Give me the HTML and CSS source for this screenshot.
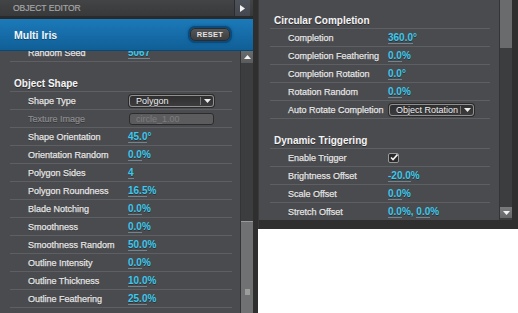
FILE: index.html
```html
<!DOCTYPE html>
<html lang="en">
<head>
  <meta charset="UTF-8" />
  <title>Object Editor</title>
  <link rel="stylesheet" href="styles.css">
</head>
<body>
  <div class="workspace">

    <section class="editor">
      <header class="editor-head">
        <span>OBJECT EDITOR</span>
        <div class="collapse">
          <svg width="5" height="7" viewBox="0 0 5 7"><path d="M0 0 L5 3.5 L0 7 Z" fill="#f2f2f2"/></svg>
        </div>
      </header>

      <div class="layer-bar">
        <h1>Multi Iris</h1>
        <div class="reset">RESET</div>
      </div>

      <div class="editor-body">
        <div class="props">
          <div class="row"><span class="label">Random Seed</span><span class="val"><span class="num">5067</span></span></div>

          <div class="section">Object Shape</div>
          <div class="row">
            <span class="label">Shape Type</span>
            <div class="select"><span>Polygon</span><span class="caret"><svg width="7" height="4" viewBox="0 0 7 4"><path d="M0 0 H7 L3.5 4 Z" fill="#eee"/></svg></span></div>
          </div>
          <div class="row">
            <span class="label off">Texture Image</span>
            <div class="field">circle_1.00</div>
          </div>
          <div class="row"><span class="label">Shape Orientation</span><span class="val"><span class="num">45.0</span>°</span></div>
          <div class="row"><span class="label">Orientation Random</span><span class="val"><span class="num">0.0</span>%</span></div>
          <div class="row"><span class="label">Polygon Sides</span><span class="val"><span class="num">4</span></span></div>
          <div class="row"><span class="label">Polygon Roundness</span><span class="val"><span class="num">16.5</span>%</span></div>
          <div class="row"><span class="label">Blade Notching</span><span class="val"><span class="num">0.0</span>%</span></div>
          <div class="row"><span class="label">Smoothness</span><span class="val"><span class="num">0.0</span>%</span></div>
          <div class="row"><span class="label">Smoothness Random</span><span class="val"><span class="num">50.0</span>%</span></div>
          <div class="row"><span class="label">Outline Intensity</span><span class="val"><span class="num">0.0</span>%</span></div>
          <div class="row"><span class="label">Outline Thickness</span><span class="val"><span class="num">10.0</span>%</span></div>
          <div class="row"><span class="label">Outline Feathering</span><span class="val"><span class="num">25.0</span>%</span></div>
        </div>

        <div class="scrollbar">
          <div class="sb-btn"><svg width="7" height="4" viewBox="0 0 7 4"><path d="M0 4 H7 L3.5 0 Z" fill="#f4f4f4"/></svg></div>
          <div class="sb-track">
            <div class="sb-thumb"><i class="grip"></i></div>
          </div>
        </div>
      </div>
    </section>

    <section class="editor-alt">
      <div class="props">
        <div class="section first">Circular Completion</div>
        <div class="row"><span class="label">Completion</span><span class="val"><span class="num">360.0</span>°</span></div>
        <div class="row"><span class="label">Completion Feathering</span><span class="val"><span class="num">0.0</span>%</span></div>
        <div class="row"><span class="label">Completion Rotation</span><span class="val"><span class="num">0.0</span>°</span></div>
        <div class="row"><span class="label">Rotation Random</span><span class="val"><span class="num">0.0</span>%</span></div>
        <div class="row">
          <span class="label">Auto Rotate Completion</span>
          <div class="select"><span>Object Rotation</span><span class="caret"><svg width="7" height="4" viewBox="0 0 7 4"><path d="M0 0 H7 L3.5 4 Z" fill="#eee"/></svg></span></div>
        </div>

        <div class="section">Dynamic Triggering</div>
        <div class="row">
          <span class="label">Enable Trigger</span>
          <span class="check"><svg width="8" height="7" viewBox="0 0 8 7"><path d="M1 3.5 L3 5.5 L7.5 0.5" fill="none" stroke="#f4f4f4" stroke-width="1.6"/></svg></span>
        </div>
        <div class="row"><span class="label">Brightness Offset</span><span class="val"><span class="num">-20.0</span>%</span></div>
        <div class="row"><span class="label">Scale Offset</span><span class="val"><span class="num">0.0</span>%</span></div>
        <div class="row"><span class="label">Stretch Offset</span><span class="val"><span class="num">0.0</span>%, <span class="num">0.0</span>%</span></div>
      </div>

      <div class="scrollbar">
        <div class="sb-thumb top"></div>
        <div class="sb-track"></div>
        <div class="sb-btn down"><svg width="7" height="4" viewBox="0 0 7 4"><path d="M0 0 H7 L3.5 4 Z" fill="#f4f4f4"/></svg></div>
      </div>
    </section>

  </div>
</body>
</html>
```

FILE: styles.css
```css
body { margin: 0; background: #fff; font-family: "Liberation Sans", Arial, sans-serif; }
.workspace { display: flex; align-items: flex-start; }

/* left panel */
.editor {
  width: 258px;
  height: 313px;
  display: flex;
  flex-direction: column;
  background: #2f2f30;
  padding-right: 5px;
  box-sizing: border-box;
}
.editor-head {
  height: 16px;
  display: flex;
  align-items: center;
  background: linear-gradient(#434446, #38393b);
  border-bottom: 3px solid #2a2a2b;
  font-size: 8.5px;
  color: #a6a6a6;
  padding-left: 13px;
  -webkit-text-stroke: 0.2px #a6a6a6;
}
.editor-head span { flex: 1; }
.collapse {
  width: 15px;
  height: 16px;
  margin-right: 3px;
  background: linear-gradient(#4e525b, #444750);
  border-left: 1px solid #2c2c2e;
  display: flex;
  align-items: center;
  justify-content: center;
}
.layer-bar {
  height: 32px;
  box-sizing: border-box;
  display: flex;
  align-items: center;
  justify-content: space-between;
  padding: 0 23px 0 14px;
  background: linear-gradient(#1c7ab9, #105f97);
  border-bottom: 1px solid #0a4874;
}
.layer-bar h1 {
  margin: 0;
  font-size: 10.5px;
  font-weight: bold;
  color: #f2f6fa;
  text-shadow: 0 1px 0 rgba(0,0,0,.35);
}
.reset {
  width: 40px;
  height: 13px;
  box-sizing: border-box;
  border-radius: 5px;
  background: linear-gradient(#555658, #3c3d3f);
  border: 1px solid #2b2c2e;
  box-shadow: 0 0 0 2px #0b4a7a, 0 0 3px 2px #0c5488;
  color: #e2e2e2;
  font-size: 7.5px;
  font-weight: bold;
  letter-spacing: 0.3px;
  display: flex;
  align-items: center;
  justify-content: center;
}
.editor-body { flex: 1; min-height: 0; display: flex; }

.props {
  flex: 1;
  overflow: hidden;
  background: #4a4b4e;
}
.editor .props > :first-child { margin-top: -7px; }

.section {
  height: 30px;
  box-sizing: border-box;
  padding: 15px 0 0 4px;
  line-height: 14px;
  margin: 0 8px 0 10px;
  border-bottom: 1px solid #5e5f62;
  font-size: 10px;
  font-weight: bold;
  color: #f4f4f4;
  text-shadow: 0 1px 0 rgba(0,0,0,.4);
}
.row {
  height: 18px;
  box-sizing: border-box;
  display: flex;
  align-items: center;
  margin: 0 8px 0 10px;
  padding-left: 18px;
  border-bottom: 1px solid #5e5f62;
  font-size: 9px;
  color: #e4e4e4;
  text-shadow: 0 1px 0 rgba(0,0,0,.35);
}
.label { width: 100px; flex-shrink: 0; white-space: nowrap; -webkit-text-stroke: 0.25px #e4e4e4; }
.label.off { color: #8c8c8e; -webkit-text-stroke: 0.2px #8c8c8e; }
.val {
  color: #3cc9ec;
  font-size: 10px;
  font-weight: bold;
  white-space: nowrap;
}
.num { border-bottom: 1px solid #70858f; line-height: 10px; display: inline-block; }

.select {
  width: 85px;
  height: 12px;
  box-sizing: border-box;
  margin-left: 1px;
  display: flex;
  align-items: center;
  padding-left: 6px;
  border: 1px solid #909090;
  border-radius: 3px;
  background: linear-gradient(#2f2f30, #3c3c3e);
  box-shadow: 0 0 0 1px #2a2a2b;
  color: #f0f0f0;
  font-size: 9px;
}
.select span:first-child { flex: 1; }
.caret {
  width: 12px;
  height: 8px;
  border-left: 1px solid #777;
  display: flex;
  align-items: center;
  justify-content: center;
}
.field {
  width: 85px;
  height: 12px;
  box-sizing: border-box;
  margin-left: 1px;
  padding-left: 6px;
  border: 1px solid #2c2c2d;
  border-radius: 3px;
  background: #5c5c5e;
  color: #7d7d7f;
  font-size: 9px;
  line-height: 10px;
  text-shadow: none;
}
.check {
  width: 11px;
  height: 10px;
  box-sizing: border-box;
  border: 1px solid #9a9a9a;
  border-radius: 2px;
  background: #2a2a2b;
  display: flex;
  align-items: center;
  justify-content: center;
}

.scrollbar {
  width: 13px;
  display: flex;
  flex-direction: column;
  background: #3c3d3f;
  border-left: 1px solid #333436;
  box-sizing: border-box;
}
.sb-btn {
  height: 12px;
  background: linear-gradient(#6a6b6d, #5a5b5d);
  display: flex;
  align-items: center;
  justify-content: center;
}
.sb-track { flex: 1; display: flex; flex-direction: column; }
.sb-thumb {
  margin-top: auto;
  height: 92px;
  background: #707172;
  border-top: 1px solid #9a9a9a;
  display: flex;
  align-items: flex-end;
  justify-content: center;
  padding-bottom: 18px;
  box-sizing: border-box;
}
.grip { width: 5px; height: 6px; background: #9c9c9d; }

/* right panel */
.editor-alt {
  width: 260px;
  height: 229px;
  display: flex;
  background: #2f2f30;
  padding: 0 6px 9px 0;
  box-sizing: border-box;
  border-left: 1px solid #3a3a3b;
}
.editor-alt .section { margin: 0 9px 0 11px; }
.editor-alt .section.first { margin-top: -1px; }
.editor-alt .row { margin: 0 9px 0 11px; }
.editor-alt .sb-thumb.top {
  margin-top: 0;
  height: 48px;
  background: #6a6b6c;
  border-top: none;
  padding: 0;
}
.sb-btn.down { height: 11px; margin-bottom: 2px; background: linear-gradient(#7a7b7c, #656667); }
```
